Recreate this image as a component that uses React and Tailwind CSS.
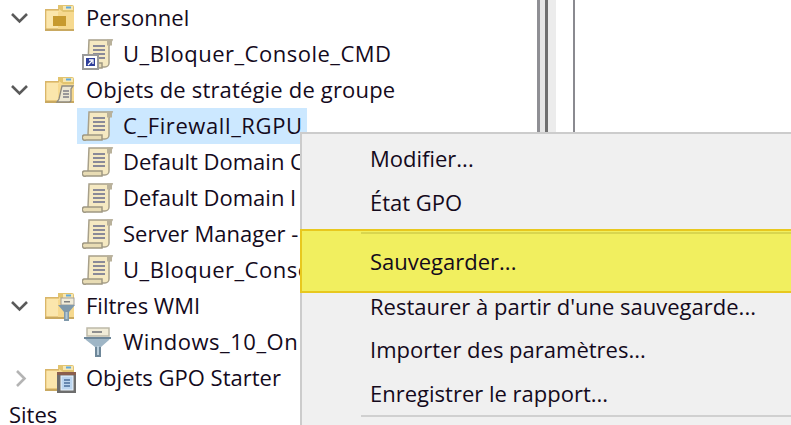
import React from 'react';

const Chevron = ({ open, muted }) => (
    <svg width="20" height="20" viewBox="0 0 20 20" fill="none" className="ml-[10px] mr-[14px] shrink-0">
        {open ? (
            <path d="M2 6l7.500 7.500L17 6" stroke="#5a5a5a" strokeWidth="2.600" />
        ) : (
            <path d="M7 3l7.500 7.500L7 18" stroke={muted ? '#b4b4b4' : '#5a5a5a'} strokeWidth="2.600" />
        )}
    </svg>
);

const Folder = ({ children }) => (
    <svg width="32" height="32" viewBox="0 0 32 32" className="mr-[10px] shrink-0">
        <path d="M14 3h14a2 2 0 0 1 2 2v22H14z" fill="#e2c46f" />
        <rect x="19" y="4" width="10" height="4" fill="#f7e7b2" />
        <rect x="22" y="4.500" width="5" height="2" fill="#5fa8dc" />
        <path d="M1 7h14l4 3v18H1z" fill="#f8dc95" />
        <path d="M1 7h14v1.500H2.500V26.500H19V28H1z" fill="#d9b66a" />
        <rect x="2.500" y="9" width="12" height="17" fill="#fbe6ac" />
        <rect x="14" y="10" width="16" height="18" fill="#f6d98f" />
        <rect x="1" y="27" width="29" height="2" fill="#c9a961" />
        {children}
    </svg>
);

const Scroll = ({ shortcut }) => (
    <svg width="32" height="32" viewBox="0 0 32 32" className="mr-[9px] shrink-0">
        <path d="M7 2h23l-3 6v17a4 4 0 0 1-4 4H3l3-4z" fill="#f5e9c2" stroke="#a8a08a" strokeWidth="1.500" />
        <rect x="25" y="1.500" width="5" height="6" fill="#b9b19a" />
        <path d="M2 25h18v5H4a2.500 2.500 0 0 1-2-5z" fill="#e8dcb4" stroke="#9f9883" strokeWidth="1.500" />
        <path d="M11 8h12M11 12h12M11 16h12M11 20h12" stroke="#8a8a98" strokeWidth="2" />
        {shortcut && (
            <g>
                <rect x="1" y="17" width="15" height="14" fill="#fff" stroke="#9a9a9a" strokeWidth="2" />
                <rect x="4" y="20" width="9" height="8" fill="#2f3f9c" />
                <path d="M6 27l4-4M7 22h4v4" stroke="#fff" strokeWidth="1.300" fill="none" />
            </g>
        )}
    </svg>
);

const Filter = () => (
    <svg width="32" height="32" viewBox="0 0 32 32" className="mr-[9px] shrink-0">
        <path d="M5 2h22v8H5z" fill="#f1ecd8" stroke="#bdb9a8" strokeWidth="1.500" />
        <rect x="10" y="5" width="10" height="2" fill="#8f8f8f" />
        <path d="M2 11h27l-2 3-8 7v10h-6V21L4 14z" fill="#9fb6c6" />
        <path d="M2 11h27v2H2zM13 21h6v10h-6z" fill="#6e8799" />
        <path d="M15 20h2v9h-2z" fill="#b9cdda" />
    </svg>
);

const FolderScroll = () => (
    <g>
        <path d="M18 12h11l-2 3v11a2 2 0 0 1-2 2H13l2-3z" fill="#ece6d2" stroke="#8e8a80" strokeWidth="1.300" />
        <path d="M19 17h6M19 20h6M19 23h6" stroke="#7d7d86" strokeWidth="1.500" />
    </g>
);

const FolderFilter = () => (
    <g>
        <rect x="17" y="8" width="13" height="7" fill="#f1ecd8" stroke="#a3a09a" />
        <rect x="20" y="11" width="6" height="1.500" fill="#808080" />
        <path d="M14 15h17l-6 7v9h-5v-9z" fill="#7f99ab" />
        <path d="M21.500 22h2v7h-2z" fill="#b4c9d6" />
    </g>
);

const FolderStarter = () => (
    <g>
        <rect x="13" y="10" width="19" height="21" fill="#6d6d6d" />
        <rect x="13" y="10" width="19" height="3" fill="#8a5e4e" />
        <rect x="17" y="14" width="12" height="14" fill="#bcd6f0" stroke="#eef5fc" />
        <path d="M20 18h6M20 21h6M20 24h6" stroke="#4b6f9a" strokeWidth="1.300" />
    </g>
);

const FolderGold = () => (
    <rect x="9" y="14" width="13" height="10" fill="#c79a2f" />
);

const Row = ({ indent, chevron, icon, label, className = '' }) => (
    <div className={`h-9 flex items-center whitespace-nowrap ${indent ? 'pl-[82px]' : ''}`}>
        {chevron}
        {icon}
        <span className={`pb-[2px] ${className}`}>{label}</span>
    </div>
);

const menuItems = [
    { label: 'Modifier...', h: 'h-[43px]' },
    { label: 'État GPO', h: 'h-[43px] pt-[2px]' },
];

const lowerItems = [
    { label: 'Restaurer à partir d\'une sauvegarde...', h: 'h-[26px]' },
    { label: 'Importer des paramètres...', h: 'h-[44px] pt-[16px]' },
    { label: 'Enregistrer le rapport...', h: 'h-[44px] pt-[16px]' },
];

export default function App() {
    return (
        <div className="relative w-[791px] h-[425px] overflow-hidden bg-white flex text-[22px] leading-9 text-[#140a1c] font-['Open_Sans','Noto_Sans',sans-serif]">
            {/* Tree */}
            <div className="w-[537px] shrink-0 flex flex-col">
                <Row chevron={<Chevron open />} icon={<Folder><FolderGold /></Folder>} label="Personnel" />
                <Row indent icon={<Scroll shortcut />} label="U_Bloquer_Console_CMD" className="tracking-[0.5px]" />
                <Row chevron={<Chevron open />} icon={<Folder><FolderScroll /></Folder>} label="Objets de stratégie de groupe" className="tracking-[0.17px]" />
                <div className="ml-[77px] pl-[5px] w-[230px] h-9 flex items-center whitespace-nowrap bg-[#cce8ff]">
                    <Scroll />
                    <span className="pb-[2px] tracking-[0.6px]">C_Firewall_RGPU</span>
                </div>
                <Row indent icon={<Scroll />} label="Default Domain C" className="w-[177px] overflow-hidden" />
                <Row indent icon={<Scroll />} label="Default Domain I" className="w-[177px] overflow-hidden" />
                <Row indent icon={<Scroll />} label="Server Manager -" className="w-[177px] overflow-hidden" />
                <Row indent icon={<Scroll />} label="U_Bloquer_Conso" className="w-[177px] overflow-hidden tracking-[0.5px]" />
                <Row chevron={<Chevron open />} icon={<Folder><FolderFilter /></Folder>} label="Filtres WMI" />
                <Row indent icon={<Filter />} label="Windows_10_On" className="w-[177px] overflow-hidden tracking-[0.5px]" />
                <Row chevron={<Chevron muted />} icon={<Folder><FolderStarter /></Folder>} label="Objets GPO Starter" />
                <div className="h-9 pl-[9px] pb-[2px]">Sites</div>
            </div>

            {/* Pane splitter */}
            <div className="h-[132px] w-[3px] bg-[#8f8f94] shrink-0" />
            <div className="h-[132px] w-[5px] bg-[#e6e6e6] shrink-0" />
            <div className="h-[132px] w-[3px] bg-[#6f6f6f] shrink-0" />
            <div className="h-[132px] w-[8px] bg-[#ececec] shrink-0" />
            <div className="h-[132px] w-[17px] shrink-0" />
            <div className="h-[132px] w-[2px] bg-[#8a8a90] shrink-0" />

            {/* Context menu */}
            <div className="absolute left-[300px] top-[132px] w-[491px] h-[293px] bg-[#f0f0f0] border-l-2 border-t-2 border-[#cccccc] flex flex-col">
                <div className="h-[95px] pt-[2px] flex flex-col">
                    {menuItems.map((item) => (
                        <div key={item.label} className={`${item.h} flex items-center pl-[68px]`}>{item.label}</div>
                    ))}
                </div>
                <div className="-ml-[2px] h-[64px] bg-[#f1ef5f] border-y-2 border-l-2 border-[#e8c81e] flex flex-col">
                    <div className="ml-[59px] mt-[1px] h-[2px] bg-[#d8d64f]" />
                    <div className="flex-1 flex items-center pl-[68px] pb-[4px]">Sauvegarder...</div>
                </div>
                <div className="flex flex-col">
                    {lowerItems.map((item) => (
                        <div key={item.label} className={`${item.h} flex items-center pl-[68px]`}>{item.label}</div>
                    ))}
                </div>
                <div className="ml-[59px] mt-[8px] h-[2px] bg-[#d0d0d0]" />
            </div>
        </div>
    );
}
